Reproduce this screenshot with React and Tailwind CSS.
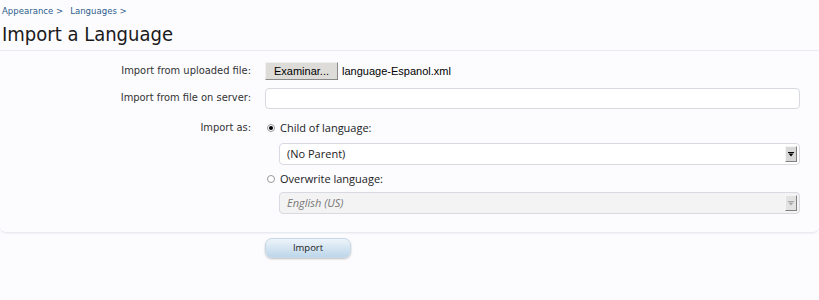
import React from "react";

const font = { fontFamily: '"DejaVu Sans Condensed", "DejaVu Sans", Tahoma, sans-serif' };
const ctl = { fontFamily: '"Open Sans", "Noto Sans", sans-serif' };
const arial = { fontFamily: '"Liberation Sans", Arial, sans-serif' };

function Arrow({ disabled }) {
  return (
    <div className={`w-[12px] h-[16px] flex items-center justify-center border border-t-[#f6f6f6] border-l-[#f6f6f6] border-r-[#808080] border-b-[#808080] ${disabled ? "bg-[#e2e2e2]" : "bg-[#d8d8d8]"}`}>
      <svg width="6" height="5" viewBox="0 0 6 5">
        <rect x="0" y="0" width="6" height="1" fill={disabled ? "#a8a8a8" : "#000"} />
        <path d="M0.5 1.5h5L3 4.5z" fill={disabled ? "#a8a8a8" : "#000"} />
      </svg>
    </div>
  );
}

function Row({ label, children, className = "" }) {
  return (
    <div className={`flex ${className}`}>
      <div className="w-[251px] shrink-0 text-right text-[11px] text-[#333] font-stretch-condensed">{label}</div>
      <div className="ml-[14px] flex-1 mr-[19px]">{children}</div>
    </div>
  );
}

export default function App() {
  return (
    <div className="w-[819px] h-[300px] bg-[#fcfcff] overflow-hidden" style={font}>
      <div className="pt-[4px] pl-[2px] text-[9.5px] leading-[14px] text-[#2f5d8c] flex gap-[7px] font-stretch-condensed">
        <span>Appearance &gt;</span>
        <span>Languages &gt;</span>
      </div>
      <h1 className="pl-[2px] mt-[3px] text-[20px] leading-[26px] text-[#1a1a1a] font-stretch-condensed">Import a Language</h1>
      <div className="mt-[3px] border-t border-[#e8ebf2] border-b rounded-b-[6px] shadow-[0_1px_1px_rgba(0,0,0,0.04)] pt-[11px] pb-[18px]">
        <Row label={<span className="leading-[18px]">Import from uploaded file:</span>} className="items-center">
          <div className="flex items-center h-[18px]">
            <div className="h-[18px] px-[8px] flex items-center bg-[#dddcd8] border border-t-[#f0f0f0] border-l-[#f0f0f0] border-r-[#8a8a8a] border-b-[#8a8a8a] text-[11px] text-black" style={arial}>
              Examinar...
            </div>
            <span className="ml-[4px] text-[11px] text-black" style={arial}>language-Espanol.xml</span>
          </div>
        </Row>
        <Row label={<span className="leading-[20px]">Import from file on server:</span>} className="mt-[8px]">
          <div className="h-[21px] bg-white border border-[#d7dae0] rounded-[4px]"></div>
        </Row>
        <Row label={<span className="leading-[16px]">Import as:</span>} className="mt-[11px]">
          <div className="flex items-center h-[16px] gap-[5px] text-[11px] text-[#222]" style={ctl}>
            <span className="ml-[2px] w-[8px] h-[8px] rounded-full bg-white border border-[#999] flex items-center justify-center">
              <span className="w-[4px] h-[4px] rounded-full bg-black"></span>
            </span>
            <span>Child of language:</span>
          </div>
          <div className="ml-[14px] mt-[7px] h-[22px] bg-white border border-[#d7dae0] rounded-[4px] flex items-center justify-between pl-[7px] pr-[2px] text-[11px] text-[#222]" style={ctl}>
            <span>(No Parent)</span>
            <Arrow />
          </div>
          <div className="flex items-center h-[16px] gap-[5px] text-[11px] text-[#222] mt-[6px]" style={ctl}>
            <span className="ml-[2px] w-[8px] h-[8px] rounded-full bg-white border border-[#999]"></span>
            <span>Overwrite language:</span>
          </div>
          <div className="ml-[14px] mt-[5px] h-[22px] bg-[#f3f3f3] border border-[#d7dae0] rounded-[4px] flex items-center justify-between pl-[7px] pr-[2px] text-[11px] text-[#777] italic" style={ctl}>
            <span>English (US)</span>
            <Arrow disabled />
          </div>
        </Row>
      </div>
      <div className="pl-[265px] mt-[1px]">
        <button className="w-[86px] h-[20px] rounded-[7px] bg-gradient-to-b from-[#eef4fa] to-[#bcd6ea] border border-[#c8d8e6] shadow-[0_1px_2px_rgba(0,0,0,0.25)] text-[9.5px] text-[#222]" style={ctl}>
          Import
        </button>
      </div>
    </div>
  );
}
